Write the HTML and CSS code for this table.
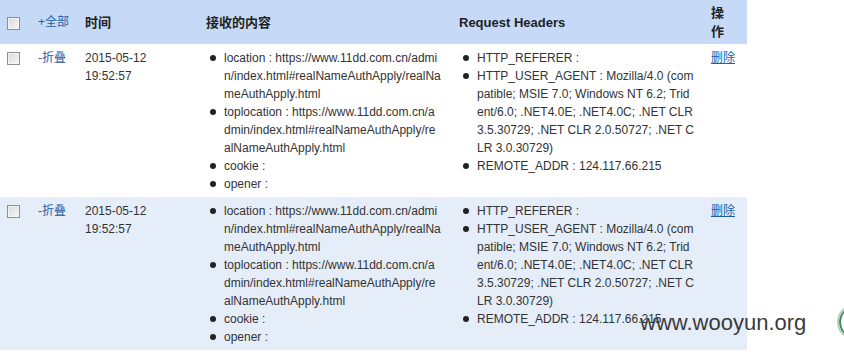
FILE: index.html
```html
<!DOCTYPE html>
<html lang="zh-CN">
<head>
    <meta charset="UTF-8">
    <title>接收的内容</title>
    <link rel="stylesheet" href="styles.css">
</head>
<body>

<table class="record-table">
    <colgroup>
        <col class="col-check">
        <col class="col-toggle">
        <col class="col-time">
        <col class="col-content">
        <col class="col-headers">
        <col class="col-op">
    </colgroup>
    <thead>
        <tr>
            <th><input type="checkbox"></th>
            <th><a href="#" class="toggle-link">+全部</a></th>
            <th>时间</th>
            <th>接收的内容</th>
            <th>Request Headers</th>
            <th class="op-head">操作</th>
        </tr>
    </thead>
    <tbody>
        <tr>
            <td><input type="checkbox"></td>
            <td><a href="#" class="toggle-link">-折叠</a></td>
            <td>2015-05-12<br>19:52:57</td>
            <td>
                <ul class="field-list content-list">
                    <li>location : https://www.11dd.com.cn/admin/index.html#realNameAuthApply/realNameAuthApply.html</li>
                    <li>toplocation : https://www.11dd.com.cn/admin/index.html#realNameAuthApply/realNameAuthApply.html</li>
                    <li>cookie :</li>
                    <li>opener :</li>
                </ul>
            </td>
            <td>
                <ul class="field-list">
                    <li>HTTP_REFERER :</li>
                    <li>HTTP_USER_AGENT : Mozilla/4.0 (compatible; MSIE 7.0; Windows NT 6.2; Trident/6.0; .NET4.0E; .NET4.0C; .NET CLR 3.5.30729; .NET CLR 2.0.50727; .NET CLR 3.0.30729)</li>
                    <li>REMOTE_ADDR : 124.117.66.215</li>
                </ul>
            </td>
            <td><a href="#" class="delete-link">删除</a></td>
        </tr>
        <tr class="alt">
            <td><input type="checkbox"></td>
            <td><a href="#" class="toggle-link">-折叠</a></td>
            <td>2015-05-12<br>19:52:57</td>
            <td>
                <ul class="field-list content-list">
                    <li>location : https://www.11dd.com.cn/admin/index.html#realNameAuthApply/realNameAuthApply.html</li>
                    <li>toplocation : https://www.11dd.com.cn/admin/index.html#realNameAuthApply/realNameAuthApply.html</li>
                    <li>cookie :</li>
                    <li>opener :</li>
                </ul>
            </td>
            <td>
                <ul class="field-list">
                    <li>HTTP_REFERER :</li>
                    <li>HTTP_USER_AGENT : Mozilla/4.0 (compatible; MSIE 7.0; Windows NT 6.2; Trident/6.0; .NET4.0E; .NET4.0C; .NET CLR 3.5.30729; .NET CLR 2.0.50727; .NET CLR 3.0.30729)</li>
                    <li>REMOTE_ADDR : 124.117.66.215</li>
                </ul>
            </td>
            <td><a href="#" class="delete-link">删除</a></td>
        </tr>
    </tbody>
</table>

<!-- watermark -->
<div class="watermark">
    <span class="watermark-text">www.wooyun.org</span>
    <span class="watermark-logo"></span>
</div>

</body>
</html>
```

FILE: styles.css
```css
body {
    font-family: "Liberation Sans", Arial, "Noto Sans CJK SC", sans-serif;
    font-size: 12px;
    color: #333;
    margin: 0;
    padding: 0;
    background-color: #fff;
    width: 844px;
    height: 354px;
    overflow: hidden;
    position: relative;
}

.record-table {
    width: 747px;
    border-collapse: collapse;
    table-layout: fixed;
}

.col-check { width: 32px; }
.col-toggle { width: 47px; }
.col-time { width: 121px; }
.col-content { width: 253px; }
.col-headers { width: 252px; }
.col-op { width: 42px; }

.record-table th {
    background-color: #c6daf8;
    color: #222;
    font-size: 13px;
    font-weight: bold;
    text-align: left;
    height: 44px;
    padding: 0 6px;
    line-height: 19px;
    vertical-align: middle;
}

.record-table th.op-head {
    padding-right: 20px;
}

.record-table th:first-child,
.record-table td:first-child {
    padding-left: 3px;
    padding-right: 0;
}

.record-table th .toggle-link {
    font-weight: normal;
    font-size: 12px;
}

.record-table td {
    padding: 5px 6px 4px 6px;
    line-height: 18px;
    vertical-align: top;
    word-break: break-all;
}

.record-table tr.alt td {
    background-color: #e5edf9;
}

.record-table input[type="checkbox"] {
    appearance: none;
    -webkit-appearance: none;
    margin: 3px 0 0 4px;
    width: 13px;
    height: 13px;
    border: 1px solid #8e8f8f;
    background: linear-gradient(135deg, #d8d8d8, #f7f7f7);
    box-shadow: inset 0 0 0 1px #f4f4f4;
    box-sizing: border-box;
}

.record-table th input[type="checkbox"] {
    margin-top: 0;
    vertical-align: middle;
}

.toggle-link {
    color: #1d5ea8;
    text-decoration: none;
}

.delete-link {
    color: #1d5ea8;
    text-decoration: underline;
}

.field-list {
    margin: 0;
    padding-left: 18px;
    list-style: none;
}

.field-list li {
    position: relative;
    padding-right: 4px;
}

.content-list li {
    padding-right: 6px;
}

.field-list li::before {
    content: "";
    position: absolute;
    left: -14px;
    top: 6px;
    width: 6px;
    height: 6px;
    border-radius: 50%;
    background-color: #222;
}

.watermark {
    position: absolute;
    left: 639px;
    top: 300px;
    width: 205px;
    height: 46px;
    overflow: hidden;
    font-family: "Liberation Sans", Arial, sans-serif;
    font-size: 22px;
    color: #3b3b3b;
}

.watermark-text {
    position: absolute;
    left: 1px;
    top: 10px;
    line-height: 26px;
}

.watermark-logo {
    position: absolute;
    left: 198px;
    top: 4px;
    width: 36px;
    height: 36px;
    border-radius: 50%;
    border: 2px solid #b9cdbf;
    box-shadow: inset 2px 0 0 #3c8c62;
    box-sizing: border-box;
}
```
